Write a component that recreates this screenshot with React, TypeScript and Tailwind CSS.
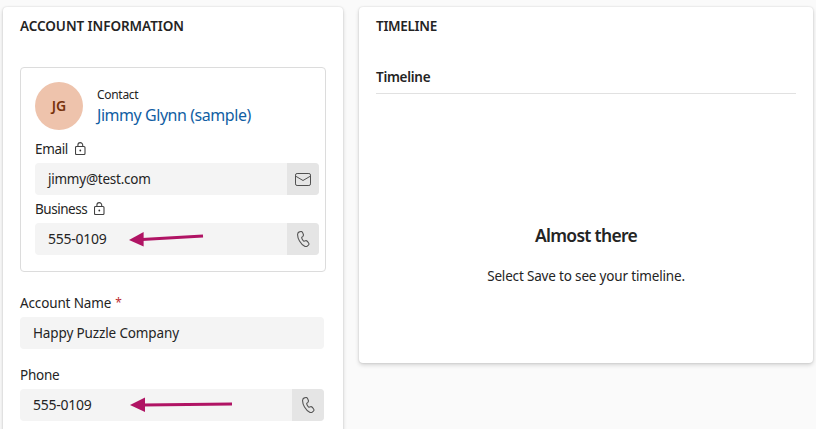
import type { ReactNode } from "react";

function LockIcon() {
  return (
    <svg className="-mt-px h-[13px] w-[11px] shrink-0" viewBox="0 0 11 13" fill="none" stroke="#424242" strokeWidth="1.1">
      <rect x="0.5" y="4.5" width="9.5" height="8" rx="1" />
      <path d="M2.9 4.5V3a2.4 2.4 0 0 1 4.8 0v1.5" />
      <circle cx="5.3" cy="8.5" r="0.9" fill="#323130" stroke="none" />
    </svg>
  );
}

function MailIcon() {
  return (
    <svg className="h-[13px] w-4" viewBox="0 0 16 13" fill="none" stroke="#505050" strokeWidth="1">
      <rect x="0.5" y="0.5" width="15" height="12" rx="1.6" />
      <path d="M0.7 3.2 8 7.5l7.3-4.3" />
    </svg>
  );
}

function PhoneIcon() {
  return (
    <svg className="h-4 w-[13px]" viewBox="0 0 13 16" fill="none" stroke="#555" strokeWidth="1.1" strokeLinejoin="round">
      <path d="M2.3 .9 3.4 .6C4.3 .3 5.2 .8 5.6 1.6L6.3 3.3C6.6 4.1 6.4 4.8 5.9 5.3L4.7 6.4C4.6 7.4 5.9 9.7 6.9 10.2L8.5 9.7C9.2 9.5 9.9 9.8 10.4 10.4L11.6 12C12.1 12.7 12 13.6 11.4 14.2L10.6 14.9C9.8 15.6 8.7 15.7 7.7 15.2C3.6 13.2 .3 7.3 .6 3.2C.7 2.1 1.3 1.2 2.3 .9Z" />
    </svg>
  );
}

function Field({ value, tracking, icon }: { value: string; tracking: string; icon?: ReactNode }) {
  return (
    <div className="flex h-8 overflow-hidden rounded bg-[#f4f4f4]">
      <div className={`flex-1 pl-[13px] leading-8 ${tracking}`}>{value}</div>
      {icon && <div className="flex w-8 items-center justify-center bg-[#e5e5e5]">{icon}</div>}
    </div>
  );
}

export default function App() {
  return (
    <div className="relative flex h-[429px] w-[816px] items-start gap-4 overflow-hidden bg-[#fafafa] pt-[7px] pl-[3px] font-['Noto_Sans','Open_Sans',sans-serif] text-[14px] leading-5 text-[#242424]">
      <section className="h-[440px] w-[340px] shrink-0 rounded bg-white px-[17px] pt-[9px] shadow-[0_0_2px_rgba(0,0,0,0.14),0_2px_4px_rgba(0,0,0,0.16)]">
        <h2 className="text-[13.5px] font-semibold tracking-[-0.06px]">ACCOUNT INFORMATION</h2>
        <div className="mt-[31px] h-[205px] w-[306px] rounded border border-[#dcdcdc] pt-[14px] pr-[6px] pl-[14px]">
          <div className="flex h-12 gap-[14px]">
            <div className="flex size-12 items-center justify-center rounded-full bg-[#eec3ac] text-[14px] font-semibold text-[#77320b]">JG</div>
            <div className="whitespace-nowrap">
              <div className="mt-[5px] text-[12px] leading-4 tracking-[-0.3px]">Contact</div>
              <div className="text-[16px] leading-[25px] tracking-[-0.45px] text-[#115ea3]">Jimmy Glynn (sample)</div>
            </div>
          </div>
          <div className="mt-[9px] flex items-center gap-[7px]">
            <span className="text-[13.5px] tracking-[-0.35px]">Email</span>
            <LockIcon />
          </div>
          <div className="mt-1">
            <Field value="jimmy@test.com" tracking="text-[13.5px] tracking-[-0.24px]" icon={<MailIcon />} />
          </div>
          <div className="mt-1 flex items-center gap-[7px]">
            <span className="text-[13.5px] tracking-[-0.48px]">Business</span>
            <LockIcon />
          </div>
          <div className="mt-1">
            <Field value="555-0109" tracking="tracking-[-0.26px]" icon={<PhoneIcon />} />
          </div>
        </div>
        <div className="mt-[21px] flex gap-1">
          <span className="text-[13.5px] tracking-[-0.14px]">Account Name</span>
          <span className="text-[12px] text-[#bc2f32]">*</span>
        </div>
        <div className="mt-1 w-[304px]">
          <Field value="Happy Puzzle Company" tracking="text-[13.5px] tracking-[-0.13px]" />
        </div>
        <div className="mt-4 text-[13.5px] tracking-[-0.25px]">Phone</div>
        <div className="mt-1 w-[304px]">
          <Field value="555-0109" tracking="tracking-[-0.26px]" icon={<PhoneIcon />} />
        </div>
      </section>

      <section className="h-[356px] w-[454px] shrink-0 rounded bg-white px-[17px] pt-[9px] shadow-[0_0_2px_rgba(0,0,0,0.14),0_2px_4px_rgba(0,0,0,0.16)]">
        <h2 className="text-[13.5px] font-semibold tracking-[-0.3px]">TIMELINE</h2>
        <div className="mt-[31px] h-[27px] border-b border-[#e1e1e1] text-[13.5px] font-semibold tracking-[-0.28px]">Timeline</div>
        <div className="mt-[129px] text-center text-[17.5px] leading-6 font-semibold tracking-[-0.7px]">Almost there</div>
        <div className="mt-[19px] text-center text-[13.5px] tracking-[-0.17px]">Select Save to see your timeline.</div>
      </section>

      <svg className="absolute top-0 left-0 h-[429px] w-[340px]" viewBox="0 0 340 429" fill="#b01464" stroke="#b01464">
        <path d="M142 239.4 203 236" strokeWidth="3" />
        <path d="M129 240 143.6 232v14.4Z" stroke="none" />
        <path d="M143 405 232 404" strokeWidth="3" />
        <path d="M130 405 145 397.5v14.5Z" stroke="none" />
      </svg>
    </div>
  );
}
